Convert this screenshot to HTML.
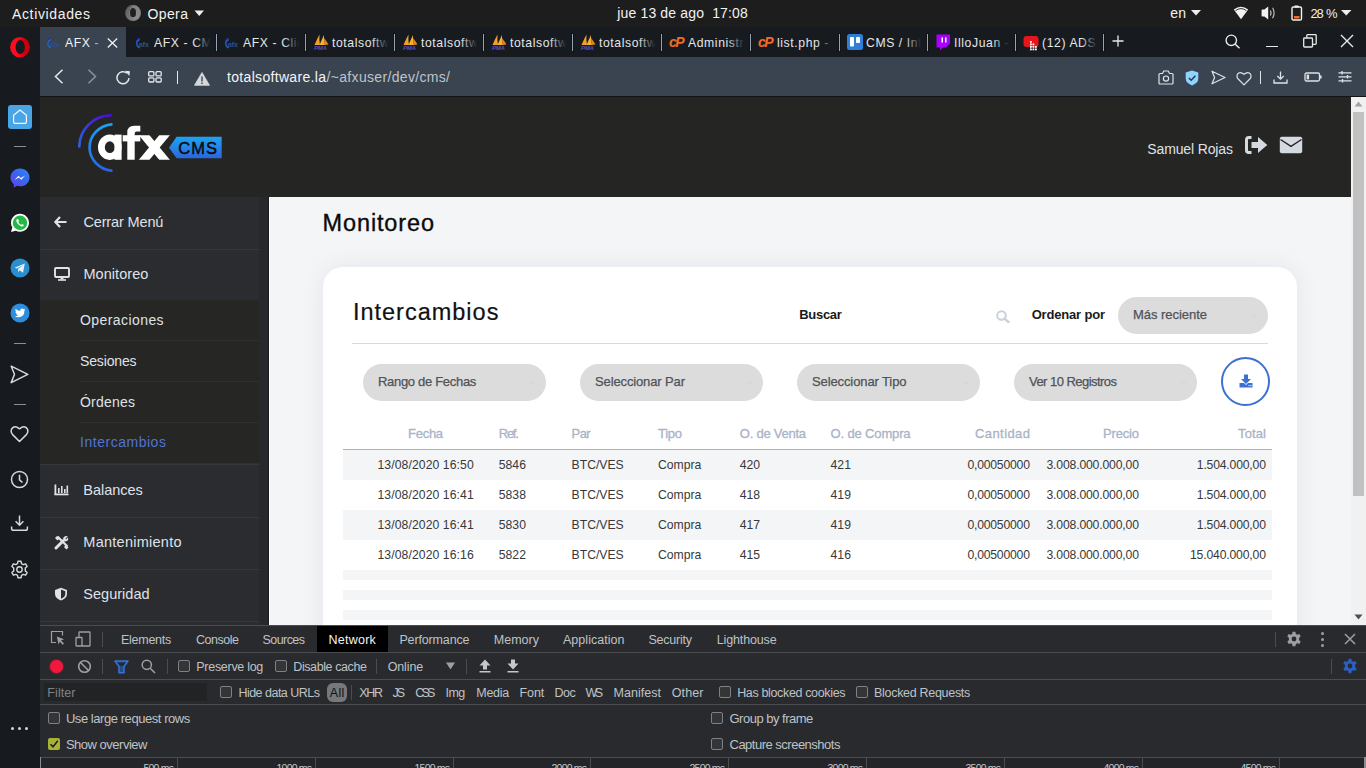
<!DOCTYPE html>
<html><head><meta charset="utf-8"><title>AFX CMS</title>
<style>
html,body{margin:0;padding:0;}
body{width:1366px;height:768px;overflow:hidden;position:relative;background:#1d1d1d;font-family:"Liberation Sans",sans-serif;}
.r{position:absolute;display:block;}
.t{position:absolute;white-space:nowrap;}
.clip{position:absolute;overflow:hidden;}
.clip .t{}
</style></head><body>
<div class="r" style="left:0px;top:0px;width:1366px;height:27px;background:#1d1d1d;"></div>
<div class="t" style="left:12.00px;top:7.05px;font-size:14px;line-height:14px;color:#f2f2f2;letter-spacing:0.641px;">Actividades</div>
<svg class="r" style="left:124px;top:4px;" width="18" height="18" viewBox="0 0 18 18"><defs><linearGradient id="gog" x1="0" y1="0" x2="1" y2="1"><stop offset="0" stop-color="#5a5a5a"/><stop offset="1" stop-color="#8a8a8a"/></linearGradient></defs><ellipse cx="9.1" cy="8.9" rx="7.9" ry="8.1" fill="url(#gog)"/><ellipse cx="10.6" cy="8.6" rx="5.4" ry="7" fill="#9a9a9a" opacity="0.5"/><ellipse cx="9" cy="8.7" rx="3" ry="4.6" fill="#222"/></svg>
<div class="t" style="left:147.40px;top:6.85px;font-size:14px;line-height:14px;color:#f2f2f2;letter-spacing:0.422px;">Opera</div>
<svg class="r" style="left:194px;top:10px;" width="11" height="7" viewBox="0 0 11 7"><path d="M0.5 0.5 L10 0.5 L5.25 6 Z" fill="#eeeeee"/></svg>
<div class="t" style="left:617.30px;top:5.95px;font-size:14px;line-height:14px;color:#f2f2f2;letter-spacing:0.149px;white-space:pre;">jue 13 de ago  17:08</div>
<div class="t" style="left:1170.30px;top:5.95px;font-size:14px;line-height:14px;color:#f2f2f2;letter-spacing:0.127px;">en</div>
<svg class="r" style="left:1191px;top:10px;" width="10" height="6" viewBox="0 0 10 6"><path d="M0 0 L10 0 L5 5.5 Z" fill="#eeeeee"/></svg>
<svg class="r" style="left:1233px;top:6px;" width="16" height="14" viewBox="0 0 16 14"><path d="M8 13.2 L0.8 3.6 Q8 -2 15.2 3.6 Z" fill="#f2f2f2"/><path d="M2.6 4.6 Q8 0.6 13.4 4.6" fill="none" stroke="#1d1d1d" stroke-width="0.9"/></svg>
<svg class="r" style="left:1261px;top:6px;" width="16" height="14" viewBox="0 0 16 14"><path d="M0.6 4.2 Q0.6 3.6 1.3 3.6 H3.4 L7.2 0.5 V13.5 L3.4 10.4 H1.3 Q0.6 10.4 0.6 9.8 Z" fill="#f2f2f2"/><path d="M9.4 4.6 Q10.6 7 9.4 9.4" stroke="#d0d0d0" stroke-width="1.1" fill="none"/><path d="M11.6 1.8 Q14.6 7 11.6 12.2" stroke="#c4c4c4" stroke-width="1.1" fill="none"/></svg>
<svg class="r" style="left:1291px;top:5px;" width="12" height="16" viewBox="0 0 12 16"><rect x="3.5" y="0.5" width="4" height="2" fill="#f2f2f2"/><rect x="1" y="2" width="9.5" height="13" rx="1.3" fill="none" stroke="#f2f2f2" stroke-width="1.4"/><rect x="3" y="11" width="5.5" height="2.5" fill="#f26a2a"/></svg>
<div class="t" style="left:1310.40px;top:6.80px;font-size:13px;line-height:13px;color:#f2f2f2;letter-spacing:-1.060px;">28</div>
<div class="t" style="left:1325.90px;top:6.80px;font-size:13px;line-height:13px;color:#f2f2f2;">%</div>
<svg class="r" style="left:1341px;top:10px;" width="11" height="6" viewBox="0 0 11 6"><path d="M0 0 L10.5 0 L5.25 5.5 Z" fill="#eeeeee"/></svg>
<div class="r" style="left:0px;top:27px;width:40px;height:741px;background:#171b20;"></div>
<svg class="r" style="left:9px;top:36px;" width="22" height="22" viewBox="0 0 22 22"><defs><linearGradient id="og" x1="0" y1="0" x2="1" y2="0"><stop offset="0.35" stop-color="#ff0a1e"/><stop offset="0.75" stop-color="#c8000c"/></linearGradient></defs><ellipse cx="11" cy="11.2" rx="9.9" ry="10.2" fill="url(#og)"/><ellipse cx="11.2" cy="11" rx="4.6" ry="7" fill="#171b20"/></svg>
<div class="r" style="left:8px;top:105px;width:24px;height:24px;background:#49a5e6;border-radius:3px;"></div>
<svg class="r" style="left:8px;top:105px;" width="24" height="24" viewBox="0 0 24 24"><path d="M5.6 10.2 L12 5 L18.4 10.2 V17 Q18.4 18.4 17 18.4 H7 Q5.6 18.4 5.6 17 Z" fill="none" stroke="#f4f8fc" stroke-width="1.2" stroke-linejoin="round"/></svg>
<div class="r" style="left:14px;top:146px;width:12px;height:1px;background:#8a8d92;"></div>
<div class="r" style="left:14px;top:343px;width:12px;height:1px;background:#8a8d92;"></div>
<div class="r" style="left:14px;top:404px;width:12px;height:1px;background:#8a8d92;"></div>
<svg class="r" style="left:9px;top:167px;" width="22" height="22" viewBox="0 0 22 22"><defs><linearGradient id="mg" x1="0" y1="1" x2="1" y2="0"><stop offset="0" stop-color="#6a3ff0"/><stop offset="0.5" stop-color="#3c62ec"/><stop offset="1" stop-color="#2a8ef6"/></linearGradient></defs><path d="M11 1.5 C5.5 1.5 1.5 5.5 1.5 10.5 C1.5 13.3 2.8 15.6 4.8 17.2 V20.5 L8 18.8 C9 19.1 10 19.3 11 19.3 C16.5 19.3 20.5 15.4 20.5 10.4 C20.5 5.5 16.5 1.5 11 1.5 Z" fill="url(#mg)"/><path d="M5.5 13 L9.5 8.8 L11.8 11 L16.2 8.5 L12.3 12.8 L10 10.6 Z" fill="#fff"/></svg>
<svg class="r" style="left:9px;top:212px;" width="22" height="22" viewBox="0 0 22 22"><path d="M11 1.8 C6 1.8 2 5.8 2 10.8 C2 12.5 2.5 14.1 3.3 15.4 L2 20 L6.7 18.7 C8 19.4 9.5 19.8 11 19.8 C16 19.8 20 15.8 20 10.8 C20 5.8 16 1.8 11 1.8 Z" fill="#fff"/><circle cx="11" cy="10.8" r="7.2" fill="#25b848"/><path d="M8 7 Q7 8 7.5 9.8 Q8.6 12.8 11.8 14.3 Q13.6 15 14.6 13.8 L14.8 13 L13 12 L12.2 12.9 Q10.2 12 9.2 10 L10 9.1 L9 7.1 Z" fill="#fff"/></svg>
<svg class="r" style="left:10px;top:258px;" width="20" height="20" viewBox="0 0 20 20"><circle cx="10" cy="10" r="9.5" fill="#2a8fd0"/><path d="M4.5 9.8 L14.8 5.6 L13 14.8 L9.6 12.2 L8.3 14.2 L8 11 L13.2 7 L7 10.5 Z" fill="#e6f1fa"/></svg>
<svg class="r" style="left:10px;top:303px;" width="20" height="20" viewBox="0 0 20 20"><circle cx="10" cy="10" r="9.5" fill="#2d8ee0"/><path d="M15.2 6.6 Q14.6 6.9 14 6.9 Q14.7 6.4 14.9 5.7 Q14.2 6.1 13.6 6.2 Q12.9 5.5 12 5.5 Q10.2 5.7 10.2 7.6 L10.2 8 Q7.4 7.9 5.6 5.8 Q4.8 7.6 6.2 8.7 Q5.7 8.7 5.3 8.5 Q5.4 10.2 7 10.7 Q6.5 10.8 6.1 10.7 Q6.6 12.1 8.1 12.2 Q6.6 13.4 4.7 13.2 Q6.4 14.3 8.4 14.3 Q14.3 14.1 14.4 8 L14.4 7.6 Q15 7.2 15.2 6.6 Z" fill="#fff"/></svg>
<svg class="r" style="left:10px;top:365px;" width="19" height="19" viewBox="0 0 19 19"><path d="M1.2 1.2 L17.8 9.3 L1.2 17.6 L4.5 9.3 Z" fill="none" stroke="#d8d8d8" stroke-width="1.5" stroke-linejoin="round"/></svg>
<svg class="r" style="left:10px;top:425px;" width="19" height="18" viewBox="0 0 19 18"><path d="M9.5 16.5 L2.6 9.6 Q0.2 7 1.8 3.7 Q4.6 -0.1 9.5 3.8 Q14.4 -0.1 17.2 3.7 Q18.8 7 16.4 9.6 Z" fill="none" stroke="#d8d8d8" stroke-width="1.5" stroke-linejoin="round"/></svg>
<svg class="r" style="left:10px;top:470px;" width="19" height="19" viewBox="0 0 19 19"><circle cx="9.5" cy="9.5" r="8" fill="none" stroke="#d8d8d8" stroke-width="1.5"/><path d="M9.5 4.8 V9.8 L12.5 12.5" fill="none" stroke="#d8d8d8" stroke-width="1.5"/></svg>
<svg class="r" style="left:10px;top:515px;" width="19" height="17" viewBox="0 0 19 17"><path d="M9.5 0.5 V10 M5.6 6.3 L9.5 10.2 L13.4 6.3" fill="none" stroke="#d8d8d8" stroke-width="1.5"/><path d="M1.6 11.5 V13.5 Q1.6 15.3 3.4 15.3 H15.6 Q17.4 15.3 17.4 13.5 V11.5" fill="none" stroke="#d8d8d8" stroke-width="1.5"/></svg>
<svg class="r" style="left:10px;top:560px;" width="19" height="19" viewBox="0 0 19 19"><path d="M8 1.2 H11 L11.5 3.6 L13.3 4.6 L15.6 3.8 L17.1 6.4 L15.3 8 V10.9 L17.1 12.6 L15.6 15.2 L13.3 14.4 L11.5 15.4 L11 17.8 H8 L7.5 15.4 L5.7 14.4 L3.4 15.2 L1.9 12.6 L3.7 10.9 V8 L1.9 6.4 L3.4 3.8 L5.7 4.6 L7.5 3.6 Z" fill="none" stroke="#d8d8d8" stroke-width="1.4" stroke-linejoin="round"/><circle cx="9.5" cy="9.5" r="2.7" fill="none" stroke="#d8d8d8" stroke-width="1.4"/></svg>
<div class="r" style="left:11px;top:727px;width:3px;height:3px;background:#d8d8d8;border-radius:50%;"></div>
<div class="r" style="left:18px;top:727px;width:3px;height:3px;background:#d8d8d8;border-radius:50%;"></div>
<div class="r" style="left:25px;top:727px;width:3px;height:3px;background:#d8d8d8;border-radius:50%;"></div>
<div class="r" style="left:40px;top:27px;width:1326px;height:30px;background:#171b20;"></div>
<div class="r" style="left:40px;top:27px;width:86px;height:30px;background:#3a4350;"></div>
<svg class="r" style="left:135px;top:36px;" width="17" height="14" viewBox="0 0 17 14"><path d="M4.6 2 A5.5 5.5 0 0 0 1.3 7" fill="none" stroke="#3a1fb8" stroke-width="1.1"/><path d="M4.8 3.6 A3.9 4.2 0 0 0 4.8 11.8" fill="none" stroke="#2266c0" stroke-width="1.2"/><text x="3.6" y="10.5" font-size="7.6" font-weight="700" fill="#2d4f86" font-family="Liberation Sans" letter-spacing="-0.3">afx</text></svg>
<div class="clip" style="left:154.0px;top:30px;width:58.0px;height:24px;"><div class="t" style="left:0.00px;top:6.67px;font-size:12.2px;line-height:12.2px;color:#e4e6ea;letter-spacing:0.6px;">AFX - CMS</div>
<div class="r" style="right:0;top:0;width:18px;height:24px;background:linear-gradient(to right,rgba(23,27,32,0),#171b20 90%);"></div></div>
<div class="r" style="left:215px;top:33px;width:3px;height:19px;background:#101318;"></div>
<div class="r" style="left:216px;top:34px;width:1px;height:17px;background:#98a4b3;"></div>
<svg class="r" style="left:224px;top:36px;" width="17" height="14" viewBox="0 0 17 14"><path d="M4.6 2 A5.5 5.5 0 0 0 1.3 7" fill="none" stroke="#3a1fb8" stroke-width="1.1"/><path d="M4.8 3.6 A3.9 4.2 0 0 0 4.8 11.8" fill="none" stroke="#2266c0" stroke-width="1.2"/><text x="3.6" y="10.5" font-size="7.6" font-weight="700" fill="#2d4f86" font-family="Liberation Sans" letter-spacing="-0.3">afx</text></svg>
<div class="clip" style="left:243.0px;top:30px;width:58.0px;height:24px;"><div class="t" style="left:0.00px;top:6.67px;font-size:12.2px;line-height:12.2px;color:#e4e6ea;letter-spacing:0.6px;">AFX - Clie</div>
<div class="r" style="right:0;top:0;width:18px;height:24px;background:linear-gradient(to right,rgba(23,27,32,0),#171b20 90%);"></div></div>
<div class="r" style="left:304px;top:33px;width:3px;height:19px;background:#101318;"></div>
<div class="r" style="left:305px;top:34px;width:1px;height:17px;background:#98a4b3;"></div>
<svg class="r" style="left:313px;top:34px;" width="17" height="16" viewBox="0 0 17 16"><path d="M1.5 11 Q4 5 6.5 0.5 Q6 6 7 11 Z" fill="#f2a02a"/><path d="M6.5 11 Q9 5 11 1 Q10.5 6 12 11 Z" fill="#f6b030"/><path d="M11 4 Q13.5 7 15.5 10.5 L11.5 11 Z" fill="#e8841a"/><text x="1" y="15.5" font-size="6" font-weight="700" font-style="italic" fill="#5a4fb8" font-family="Liberation Sans" letter-spacing="-0.3">PMA</text></svg>
<div class="clip" style="left:332.0px;top:30px;width:58.0px;height:24px;"><div class="t" style="left:0.00px;top:6.67px;font-size:12.2px;line-height:12.2px;color:#e4e6ea;letter-spacing:0.6px;">totalsoftw</div>
<div class="r" style="right:0;top:0;width:18px;height:24px;background:linear-gradient(to right,rgba(23,27,32,0),#171b20 90%);"></div></div>
<div class="r" style="left:393px;top:33px;width:3px;height:19px;background:#101318;"></div>
<div class="r" style="left:394px;top:34px;width:1px;height:17px;background:#98a4b3;"></div>
<svg class="r" style="left:402px;top:34px;" width="17" height="16" viewBox="0 0 17 16"><path d="M1.5 11 Q4 5 6.5 0.5 Q6 6 7 11 Z" fill="#f2a02a"/><path d="M6.5 11 Q9 5 11 1 Q10.5 6 12 11 Z" fill="#f6b030"/><path d="M11 4 Q13.5 7 15.5 10.5 L11.5 11 Z" fill="#e8841a"/><text x="1" y="15.5" font-size="6" font-weight="700" font-style="italic" fill="#5a4fb8" font-family="Liberation Sans" letter-spacing="-0.3">PMA</text></svg>
<div class="clip" style="left:421.0px;top:30px;width:58.0px;height:24px;"><div class="t" style="left:0.00px;top:6.67px;font-size:12.2px;line-height:12.2px;color:#e4e6ea;letter-spacing:0.6px;">totalsoftw</div>
<div class="r" style="right:0;top:0;width:18px;height:24px;background:linear-gradient(to right,rgba(23,27,32,0),#171b20 90%);"></div></div>
<div class="r" style="left:482px;top:33px;width:3px;height:19px;background:#101318;"></div>
<div class="r" style="left:483px;top:34px;width:1px;height:17px;background:#98a4b3;"></div>
<svg class="r" style="left:491px;top:34px;" width="17" height="16" viewBox="0 0 17 16"><path d="M1.5 11 Q4 5 6.5 0.5 Q6 6 7 11 Z" fill="#f2a02a"/><path d="M6.5 11 Q9 5 11 1 Q10.5 6 12 11 Z" fill="#f6b030"/><path d="M11 4 Q13.5 7 15.5 10.5 L11.5 11 Z" fill="#e8841a"/><text x="1" y="15.5" font-size="6" font-weight="700" font-style="italic" fill="#5a4fb8" font-family="Liberation Sans" letter-spacing="-0.3">PMA</text></svg>
<div class="clip" style="left:510.0px;top:30px;width:58.0px;height:24px;"><div class="t" style="left:0.00px;top:6.67px;font-size:12.2px;line-height:12.2px;color:#e4e6ea;letter-spacing:0.6px;">totalsoftw</div>
<div class="r" style="right:0;top:0;width:18px;height:24px;background:linear-gradient(to right,rgba(23,27,32,0),#171b20 90%);"></div></div>
<div class="r" style="left:571px;top:33px;width:3px;height:19px;background:#101318;"></div>
<div class="r" style="left:572px;top:34px;width:1px;height:17px;background:#98a4b3;"></div>
<svg class="r" style="left:580px;top:34px;" width="17" height="16" viewBox="0 0 17 16"><path d="M1.5 11 Q4 5 6.5 0.5 Q6 6 7 11 Z" fill="#f2a02a"/><path d="M6.5 11 Q9 5 11 1 Q10.5 6 12 11 Z" fill="#f6b030"/><path d="M11 4 Q13.5 7 15.5 10.5 L11.5 11 Z" fill="#e8841a"/><text x="1" y="15.5" font-size="6" font-weight="700" font-style="italic" fill="#5a4fb8" font-family="Liberation Sans" letter-spacing="-0.3">PMA</text></svg>
<div class="clip" style="left:599.0px;top:30px;width:58.0px;height:24px;"><div class="t" style="left:0.00px;top:6.67px;font-size:12.2px;line-height:12.2px;color:#e4e6ea;letter-spacing:0.6px;">totalsoftw</div>
<div class="r" style="right:0;top:0;width:18px;height:24px;background:linear-gradient(to right,rgba(23,27,32,0),#171b20 90%);"></div></div>
<div class="r" style="left:660px;top:33px;width:3px;height:19px;background:#101318;"></div>
<div class="r" style="left:661px;top:34px;width:1px;height:17px;background:#98a4b3;"></div>
<svg class="r" style="left:669px;top:35px;" width="18" height="14" viewBox="0 0 18 14"><text x="0" y="12" font-size="14" font-weight="700" font-style="italic" fill="#f36b21" font-family="Liberation Sans" letter-spacing="-1.5">cP</text></svg>
<div class="clip" style="left:688.0px;top:30px;width:58.0px;height:24px;"><div class="t" style="left:0.00px;top:6.67px;font-size:12.2px;line-height:12.2px;color:#e4e6ea;letter-spacing:0.6px;">Administr</div>
<div class="r" style="right:0;top:0;width:18px;height:24px;background:linear-gradient(to right,rgba(23,27,32,0),#171b20 90%);"></div></div>
<div class="r" style="left:749px;top:33px;width:3px;height:19px;background:#101318;"></div>
<div class="r" style="left:750px;top:34px;width:1px;height:17px;background:#98a4b3;"></div>
<svg class="r" style="left:758px;top:35px;" width="18" height="14" viewBox="0 0 18 14"><text x="0" y="12" font-size="14" font-weight="700" font-style="italic" fill="#f36b21" font-family="Liberation Sans" letter-spacing="-1.5">cP</text></svg>
<div class="clip" style="left:777.0px;top:30px;width:58.0px;height:24px;"><div class="t" style="left:0.00px;top:6.67px;font-size:12.2px;line-height:12.2px;color:#e4e6ea;letter-spacing:0.6px;">list.php - A</div>
<div class="r" style="right:0;top:0;width:18px;height:24px;background:linear-gradient(to right,rgba(23,27,32,0),#171b20 90%);"></div></div>
<div class="r" style="left:838px;top:33px;width:3px;height:19px;background:#101318;"></div>
<div class="r" style="left:839px;top:34px;width:1px;height:17px;background:#98a4b3;"></div>
<svg class="r" style="left:847px;top:34px;" width="16" height="16" viewBox="0 0 16 16"><rect x="0" y="0" width="16" height="16" rx="2.5" fill="#2f7fd8"/><rect x="3" y="3" width="4" height="9.5" rx="0.8" fill="#fff"/><rect x="9" y="3" width="4" height="6" rx="0.8" fill="#fff"/></svg>
<div class="clip" style="left:866.0px;top:30px;width:57.0px;height:24px;"><div class="t" style="left:0.00px;top:6.67px;font-size:12.2px;line-height:12.2px;color:#e4e6ea;letter-spacing:0.6px;">CMS / Inte</div>
<div class="r" style="right:0;top:0;width:18px;height:24px;background:linear-gradient(to right,rgba(23,27,32,0),#171b20 90%);"></div></div>
<div class="r" style="left:926px;top:33px;width:3px;height:19px;background:#101318;"></div>
<div class="r" style="left:927px;top:34px;width:1px;height:17px;background:#98a4b3;"></div>
<svg class="r" style="left:935px;top:34px;" width="16" height="17" viewBox="0 0 16 17"><path d="M1.5 0.5 H15 V9.5 L11 13.5 H8 L5 16.5 V13.5 H1.5 Z" fill="#a800ff"/><rect x="6.5" y="3.5" width="1.5" height="5" fill="#fff"/><rect x="10" y="3.5" width="1.5" height="5" fill="#fff"/></svg>
<div class="clip" style="left:954.0px;top:30px;width:57.0px;height:24px;"><div class="t" style="left:0.00px;top:6.67px;font-size:12.2px;line-height:12.2px;color:#e4e6ea;letter-spacing:0.6px;">IlloJuan - T</div>
<div class="r" style="right:0;top:0;width:18px;height:24px;background:linear-gradient(to right,rgba(23,27,32,0),#171b20 90%);"></div></div>
<div class="r" style="left:1014px;top:33px;width:3px;height:19px;background:#101318;"></div>
<div class="r" style="left:1015px;top:34px;width:1px;height:17px;background:#98a4b3;"></div>
<svg class="r" style="left:1023px;top:35px;" width="17" height="16" viewBox="0 0 17 16"><rect x="0.5" y="1" width="15" height="11" rx="3" fill="#e8141b"/><rect x="6" y="5" width="9" height="11" fill="#1b1d22" opacity="0"/><rect x="7" y="6" width="1.8" height="1.8" fill="#ffffff"/><rect x="7" y="8.5" width="1.8" height="1.8" fill="#ffffff"/><rect x="9.5" y="8.5" width="1.8" height="1.8" fill="#ffffff"/><rect x="7" y="11" width="1.8" height="1.8" fill="#ffffff"/><rect x="9.5" y="11" width="1.8" height="1.8" fill="#ffffff"/><rect x="12" y="11" width="1.8" height="1.8" fill="#ffffff"/><rect x="7" y="13.5" width="1.8" height="1.8" fill="#ffffff"/><rect x="9.5" y="13.5" width="1.8" height="1.8" fill="#ffffff"/><rect x="12" y="13.5" width="1.8" height="1.8" fill="#ffffff"/></svg>
<div class="clip" style="left:1042.0px;top:30px;width:57.0px;height:24px;"><div class="t" style="left:0.00px;top:6.67px;font-size:12.2px;line-height:12.2px;color:#e4e6ea;letter-spacing:0.6px;">(12) ADSC</div>
<div class="r" style="right:0;top:0;width:18px;height:24px;background:linear-gradient(to right,rgba(23,27,32,0),#171b20 90%);"></div></div>
<div class="r" style="left:1102px;top:33px;width:3px;height:19px;background:#101318;"></div>
<div class="r" style="left:1103px;top:34px;width:1px;height:17px;background:#98a4b3;"></div>
<svg class="r" style="left:46px;top:36px;" width="17" height="14" viewBox="0 0 17 14"><path d="M4.6 2 A5.5 5.5 0 0 0 1.3 7" fill="none" stroke="#3a1fb8" stroke-width="1.1"/><path d="M4.8 3.6 A3.9 4.2 0 0 0 4.8 11.8" fill="none" stroke="#2266c0" stroke-width="1.2"/><text x="3.6" y="10.5" font-size="7.6" font-weight="700" fill="#2d4f86" font-family="Liberation Sans" letter-spacing="-0.3">afx</text></svg>
<div class="clip" style="left:65px;top:30px;width:38px;height:24px;"><div class="t" style="left:0.00px;top:6.67px;font-size:12.2px;line-height:12.2px;color:#f0f2f4;letter-spacing:0.6px;">AFX - CMS</div>
<div class="r" style="right:0;top:0;width:10px;height:24px;background:linear-gradient(to right,rgba(58,67,80,0),#3a4350);"></div></div>
<svg class="r" style="left:107px;top:38px;" width="11" height="10" viewBox="0 0 11 10"><path d="M0.8 0.5 L10.2 9.5 M10.2 0.5 L0.8 9.5" stroke="#f0f0f0" stroke-width="1.3"/></svg>
<svg class="r" style="left:1112px;top:35px;" width="12" height="12" viewBox="0 0 12 12"><path d="M6 0.5 V11.5 M0.5 6 H11.5" stroke="#e8e8e8" stroke-width="1.3"/></svg>
<svg class="r" style="left:1225px;top:34px;" width="16" height="15" viewBox="0 0 16 15"><circle cx="6.3" cy="6.3" r="5.2" fill="none" stroke="#e8e8e8" stroke-width="1.4"/><path d="M10 10 L14.5 14.3" stroke="#e8e8e8" stroke-width="1.5"/></svg>
<div class="r" style="left:1266px;top:46px;width:12px;height:1.3px;background:#e8e8e8;"></div>
<svg class="r" style="left:1303px;top:34px;" width="14" height="14" viewBox="0 0 14 14"><rect x="0.7" y="4" width="8.8" height="9" rx="0.8" fill="none" stroke="#e8e8e8" stroke-width="1.3"/><path d="M3.8 3.8 V1.5 Q3.8 0.7 4.6 0.7 H12.4 Q13.2 0.7 13.2 1.5 V9.6 Q13.2 10.3 12.4 10.3 H9.7" fill="none" stroke="#e8e8e8" stroke-width="1.3"/></svg>
<svg class="r" style="left:1340px;top:34px;" width="14" height="14" viewBox="0 0 14 14"><path d="M1 1 L13 13 M13 1 L1 13" stroke="#e8e8e8" stroke-width="1.4"/></svg>
<div class="r" style="left:40px;top:57px;width:1326px;height:39px;background:#3a4350;"></div>
<div class="r" style="left:40px;top:96px;width:1326px;height:1px;background:#111316;"></div>
<svg class="r" style="left:54px;top:69px;" width="10" height="15" viewBox="0 0 10 15"><path d="M8.5 0.8 L1.5 7.5 L8.5 14.2" fill="none" stroke="#e6e8ea" stroke-width="1.5"/></svg>
<svg class="r" style="left:87px;top:69px;" width="10" height="15" viewBox="0 0 10 15"><path d="M1.5 0.8 L8.5 7.5 L1.5 14.2" fill="none" stroke="#8d939b" stroke-width="1.5"/></svg>
<svg class="r" style="left:116px;top:70px;" width="16" height="15" viewBox="0 0 16 15"><path d="M13 8 A6 6 0 1 1 11 3.2" fill="none" stroke="#e6e8ea" stroke-width="1.5"/><path d="M9 0.8 L14 1.2 L13.3 6 Z" fill="#e6e8ea"/></svg>
<svg class="r" style="left:148px;top:71px;" width="14" height="12" viewBox="0 0 14 12"><rect x="0.7" y="0.7" width="5.2" height="4.2" rx="1" fill="none" stroke="#e6e8ea" stroke-width="1.3"/><rect x="8" y="0.7" width="5.2" height="4.2" rx="1" fill="none" stroke="#e6e8ea" stroke-width="1.3"/><rect x="0.7" y="6.8" width="5.2" height="4.2" rx="1" fill="none" stroke="#e6e8ea" stroke-width="1.3"/><rect x="8" y="6.8" width="5.2" height="4.2" rx="1" fill="none" stroke="#e6e8ea" stroke-width="1.3"/></svg>
<div class="r" style="left:177px;top:71px;width:1px;height:13px;background:#e6e8ea;"></div>
<svg class="r" style="left:194px;top:72px;" width="16" height="14" viewBox="0 0 16 14"><path d="M8 0.5 L15.5 13.3 H0.5 Z" fill="#d6d8da" stroke="#d6d8da" stroke-width="0.8" stroke-linejoin="round"/><rect x="7.3" y="4.5" width="1.4" height="5" fill="#3a4350"/><rect x="7.3" y="10.5" width="1.4" height="1.5" fill="#3a4350"/></svg>
<div class="t" style="left:227.00px;top:70.15px;font-size:14px;line-height:14px;color:#f4f5f6;letter-spacing:0.323px;">totalsoftware.la</div>
<div class="t" style="left:326.50px;top:70.15px;font-size:14px;line-height:14px;color:#bfc4cb;letter-spacing:0.331px;">/~afxuser/dev/cms/</div>
<svg class="r" style="left:1158px;top:70px;" width="16" height="15" viewBox="0 0 16 15"><path d="M1 4.5 Q1 3.5 2 3.5 H4.5 L5.8 1 H10.2 L11.5 3.5 H14 Q15 3.5 15 4.5 V13 Q15 14 14 14 H2 Q1 14 1 13 Z" fill="none" stroke="#e0e3e6" stroke-width="1.2"/><circle cx="8" cy="8.6" r="2.6" fill="none" stroke="#e0e3e6" stroke-width="1.2"/></svg>
<svg class="r" style="left:1185px;top:70px;" width="14" height="16" viewBox="0 0 14 16"><path d="M7 0.5 L13.3 2.6 V8.5 Q13.3 12.8 7 15.5 Q0.7 12.8 0.7 8.5 V2.6 Z" fill="#8fd3ff"/><path d="M3.8 8 L6.2 10.3 L10.4 5.8" fill="none" stroke="#2c3a4a" stroke-width="1.5"/></svg>
<svg class="r" style="left:1211px;top:70px;" width="15" height="15" viewBox="0 0 15 15"><path d="M1 1.2 L14 7.5 L1 13.8 L3.6 7.5 Z" fill="none" stroke="#e0e3e6" stroke-width="1.2" stroke-linejoin="round"/></svg>
<svg class="r" style="left:1236px;top:71px;" width="16" height="15" viewBox="0 0 16 15"><path d="M8 13.8 L2.2 8 Q0.2 5.8 1.5 3.2 Q3.8 0 8 3.3 Q12.2 0 14.5 3.2 Q15.8 5.8 13.8 8 Z" fill="none" stroke="#e0e3e6" stroke-width="1.2" stroke-linejoin="round"/></svg>
<div class="r" style="left:1260px;top:71px;width:1px;height:13px;background:#e0e3e6;"></div>
<svg class="r" style="left:1273px;top:71px;" width="15" height="13" viewBox="0 0 15 13"><path d="M7.5 0.5 V8 M4.3 5 L7.5 8.2 L10.7 5" fill="none" stroke="#e0e3e6" stroke-width="1.3"/><path d="M1 8.5 V12 H14 V8.5" fill="none" stroke="#e0e3e6" stroke-width="1.3"/></svg>
<svg class="r" style="left:1304px;top:72px;" width="18" height="10" viewBox="0 0 18 10"><rect x="1" y="1" width="14.5" height="8" rx="1.5" fill="none" stroke="#e0e3e6" stroke-width="1.3"/><rect x="2.6" y="2.6" width="2.5" height="4.8" fill="#e0e3e6"/><rect x="16" y="3.5" width="1.6" height="3" fill="#e0e3e6"/></svg>
<svg class="r" style="left:1338px;top:71px;" width="14" height="12" viewBox="0 0 14 12"><path d="M0.5 1.8 H13.5 M0.5 5.8 H13.5 M0.5 9.8 H13.5" stroke="#e0e3e6" stroke-width="1.2"/><path d="M4 0 V3.6 M9.5 4 V7.6 M4.5 8 V11.6" stroke="#e0e3e6" stroke-width="1.3"/></svg>
<div class="r" style="left:40px;top:97px;width:1311px;height:100px;background:#252523;"></div>
<svg class="r" style="left:70px;top:108px;" width="50" height="70" viewBox="0 0 50 70"><defs><linearGradient id="g1" x1="0" y1="1" x2="1" y2="0"><stop offset="0" stop-color="#3060dc"/><stop offset="1" stop-color="#4a0fd0"/></linearGradient><linearGradient id="g2" x1="0" y1="0" x2="0" y2="1"><stop offset="0" stop-color="#1aa2f2"/><stop offset="1" stop-color="#2c62e2"/></linearGradient></defs><g transform="translate(-70,-108)"><path d="M79.3 146.5 A31.6 31.6 0 0 1 110.5 115.4" fill="none" stroke="url(#g1)" stroke-width="2.7" stroke-linecap="round"/><path d="M111.4 124.3 A24.6 23.3 0 0 0 111.4 170.6" fill="none" stroke="url(#g2)" stroke-width="2.7" stroke-linecap="round"/></g></svg>
<svg class="r" style="left:90px;top:120px;" width="85" height="45" viewBox="0 0 85 45"><g transform="translate(-90,-120)" fill="#ffffff"><ellipse cx="109.8" cy="147.2" rx="8.4" ry="9.3" fill="none" stroke="#ffffff" stroke-width="6.8"/><rect x="114.6" y="134.6" width="7" height="25.2"/><path d="M127.3 159.8 V132.5 Q127.3 125.8 134.2 125.8 H140.3 V131.6 H136.6 Q134.7 131.6 134.7 133.6 V159.8 Z"/><rect x="122.7" y="135.2" width="17.6" height="6.2"/><clipPath id="cx"><rect x="138" y="135.2" width="33" height="24.6"/></clipPath><g clip-path="url(#cx)" stroke="#ffffff" stroke-width="8.2"><path d="M141.5 132 L167.2 163"/><path d="M167.2 132 L141.5 163"/></g></g></svg>
<svg class="r" style="left:168px;top:136px;" width="55" height="23" viewBox="0 0 55 23"><defs><linearGradient id="g3" x1="0" y1="0" x2="0" y2="1"><stop offset="0" stop-color="#1ea4f2"/><stop offset="1" stop-color="#2b66dc"/></linearGradient></defs><path d="M1 11.7 L8.6 0.7 H53.7 V22.3 H8.6 Z" fill="url(#g3)"/></svg>
<div class="t" style="left:178.30px;top:139.63px;font-size:16.5px;line-height:16.5px;color:#0a0a0a;letter-spacing:1.016px;-webkit-text-stroke:0.45px #0a0a0a;">CMS</div>
<div class="t" style="left:1147.30px;top:141.55px;font-size:14px;line-height:14px;color:#dfe2e7;letter-spacing:-0.132px;">Samuel Rojas</div>
<svg class="r" style="left:1245px;top:136px;" width="23" height="18" viewBox="0 0 23 18"><path d="M6.5 1.5 H3.8 Q1.5 1.5 1.5 3.8 V14.2 Q1.5 16.5 3.8 16.5 H6.5" fill="none" stroke="#d5d9e0" stroke-width="3"/><path d="M6.5 6 H13 V1 L22.3 9 L13 17 V12 H6.5 Z" fill="#d5d9e0"/></svg>
<svg class="r" style="left:1279px;top:136px;" width="24" height="18" viewBox="0 0 24 18"><rect x="0.8" y="0.8" width="22.4" height="16.4" rx="2" fill="#d5d9e0"/><path d="M1.5 3.5 L12 10.3 L22.5 3.5" fill="none" stroke="#252523" stroke-width="1.4"/></svg>
<div class="r" style="left:40px;top:197px;width:219px;height:428px;background:#2b2c30;"></div>
<div class="r" style="left:259px;top:197px;width:10px;height:428px;background:#27282c;"></div>
<div class="r" style="left:268px;top:197px;width:1px;height:428px;background:#1b1c1e;"></div>
<div class="r" style="left:269px;top:197px;width:1px;height:428px;background:#ffffff;"></div>
<div class="r" style="left:40px;top:249px;width:219px;height:1px;background:#36373b;"></div>
<div class="r" style="left:40px;top:300px;width:219px;height:164px;background:#262624;"></div>
<div class="r" style="left:80px;top:340px;width:179px;height:1px;background:#303030;"></div>
<div class="r" style="left:80px;top:381px;width:179px;height:1px;background:#303030;"></div>
<div class="r" style="left:80px;top:422px;width:179px;height:1px;background:#303030;"></div>
<div class="r" style="left:80px;top:463px;width:179px;height:1px;background:#303030;"></div>
<div class="r" style="left:40px;top:464px;width:219px;height:1px;background:#36373b;"></div>
<div class="r" style="left:40px;top:517px;width:219px;height:1px;background:#36373b;"></div>
<div class="r" style="left:40px;top:569px;width:219px;height:1px;background:#36373b;"></div>
<div class="r" style="left:40px;top:621px;width:219px;height:1px;background:#36373b;"></div>
<svg class="r" style="left:54px;top:216px;" width="13" height="12" viewBox="0 0 13 12"><path d="M6 1 L1.3 6 L6 11 M1.5 6 H12.5" fill="none" stroke="#dfe2e8" stroke-width="2.2" stroke-linejoin="round"/></svg>
<div class="t" style="left:83.40px;top:214.93px;font-size:14.5px;line-height:14.5px;color:#dfe2e8;letter-spacing:-0.139px;">Cerrar Menú</div>
<svg class="r" style="left:54px;top:267px;" width="16" height="14" viewBox="0 0 16 14"><rect x="1" y="1" width="14" height="9" rx="1" fill="none" stroke="#dfe2e8" stroke-width="1.9"/><rect x="6.5" y="10" width="3" height="2.5" fill="#dfe2e8"/><rect x="4" y="12.2" width="8" height="1.6" fill="#dfe2e8"/></svg>
<div class="t" style="left:83.40px;top:267.23px;font-size:14.5px;line-height:14.5px;color:#dfe2e8;letter-spacing:0.065px;">Monitoreo</div>
<div class="t" style="left:80.00px;top:312.85px;font-size:14px;line-height:14px;color:#dfe2e8;letter-spacing:0.422px;">Operaciones</div>
<div class="t" style="left:80.00px;top:353.85px;font-size:14px;line-height:14px;color:#dfe2e8;letter-spacing:-0.142px;">Sesiones</div>
<div class="t" style="left:80.00px;top:394.55px;font-size:14px;line-height:14px;color:#dfe2e8;letter-spacing:0.217px;">Órdenes</div>
<div class="t" style="left:80.00px;top:435.15px;font-size:14px;line-height:14px;color:#4f74d6;letter-spacing:0.523px;">Intercambios</div>
<svg class="r" style="left:54px;top:484px;" width="15" height="12" viewBox="0 0 15 12"><rect x="0.5" y="0.5" width="1.8" height="10.5" fill="#dfe2e8"/><rect x="0.5" y="9.5" width="14" height="1.8" fill="#dfe2e8"/><rect x="4" y="4" width="1.6" height="5" fill="#dfe2e8"/><rect x="7" y="2" width="1.6" height="7" fill="#dfe2e8"/><rect x="10" y="5" width="1.6" height="4" fill="#dfe2e8"/><rect x="12.5" y="1.5" width="1.6" height="7.5" fill="#dfe2e8"/></svg>
<div class="t" style="left:83.30px;top:483.33px;font-size:14.5px;line-height:14.5px;color:#dfe2e8;letter-spacing:-0.022px;">Balances</div>
<svg class="r" style="left:54px;top:535px;" width="15" height="15" viewBox="0 0 15 15"><path d="M2 13 L9.5 5.5" stroke="#dfe2e8" stroke-width="3" stroke-linecap="round"/><path d="M3.5 1.5 L13.5 11.5" stroke="#dfe2e8" stroke-width="2.2"/><path d="M1 3 L3 1 L5.5 3.5 L3.5 5.5 Z" fill="#dfe2e8"/><path d="M9 3.5 Q10 0 13.8 1.2 L11.5 3.5 L12 4.5 L14 2.2 Q15 6 11.5 6.5 Z" fill="#dfe2e8"/><path d="M11 11 L13.5 13.5" stroke="#dfe2e8" stroke-width="3"/></svg>
<div class="t" style="left:83.30px;top:535.23px;font-size:14.5px;line-height:14.5px;color:#dfe2e8;letter-spacing:0.258px;">Mantenimiento</div>
<svg class="r" style="left:54px;top:587px;" width="14" height="14" viewBox="0 0 14 14"><path d="M7 0.8 L13 3 V6.8 Q13 11.5 7 13.6 Q1 11.5 1 6.8 V3 Z" fill="#dfe2e8"/><path d="M7 2.6 L11.3 4.2 V6.8 Q11.3 10.2 7 11.8 Z" fill="#2b2c30"/></svg>
<div class="t" style="left:83.30px;top:587.23px;font-size:14.5px;line-height:14.5px;color:#dfe2e8;letter-spacing:0.024px;">Seguridad</div>
<div class="r" style="left:270px;top:197px;width:1081px;height:428px;background:#f4f5f7;"></div>
<div class="t" style="left:322.60px;top:212.11px;font-size:23.5px;line-height:23.5px;color:#0b0b0b;letter-spacing:0.862px;-webkit-text-stroke:0.35px #0b0b0b;">Monitoreo</div>
<div class="r" style="left:323px;top:267px;width:974px;height:400px;background:#ffffff;border-radius:20px;box-shadow:0 0 24px rgba(20,30,60,0.07);"></div>
<div class="t" style="left:352.90px;top:301.11px;font-size:23.5px;line-height:23.5px;color:#111111;letter-spacing:0.997px;-webkit-text-stroke:0.2px #111;">Intercambios</div>
<div class="r" style="left:352px;top:343px;width:916px;height:1px;background:#d3dbe6;"></div>
<div class="t" style="left:799.20px;top:308.20px;font-size:13px;line-height:13px;color:#1a1a1a;letter-spacing:-0.276px;font-weight:700;">Buscar</div>
<svg class="r" style="left:996px;top:310px;" width="14" height="13" viewBox="0 0 14 13"><circle cx="5.5" cy="5.5" r="4.3" fill="none" stroke="#c9d1dc" stroke-width="2"/><path d="M8.6 8.6 L12.6 12.2" stroke="#c9d1dc" stroke-width="2.4" stroke-linecap="round"/></svg>
<div class="t" style="left:1031.70px;top:308.20px;font-size:13px;line-height:13px;color:#1a1a1a;letter-spacing:-0.182px;font-weight:700;">Ordenar por</div>
<div class="r" style="left:1118px;top:297px;width:150px;height:37px;background:#dcdcdc;border-radius:18.5px;"></div>
<div class="t" style="left:1133.00px;top:308.30px;font-size:13px;line-height:13px;color:#4f5359;letter-spacing:-0.038px;-webkit-text-stroke:0.25px #4f5359;">Más reciente</div>
<svg class="r" style="left:1251px;top:314px;" width="7" height="5" viewBox="0 0 7 5"><path d="M0 0.5 H7 L3.5 4.2 Z" fill="#d2d8e2"/></svg>
<div class="r" style="left:363px;top:364px;width:183px;height:37px;background:#dcdcdc;border-radius:18.5px;"></div>
<div class="t" style="left:378.00px;top:375.30px;font-size:13px;line-height:13px;color:#4f5359;letter-spacing:-0.309px;-webkit-text-stroke:0.25px #4f5359;">Rango de Fechas</div>
<svg class="r" style="left:529px;top:381px;" width="7" height="5" viewBox="0 0 7 5"><path d="M0 0.5 H7 L3.5 4.2 Z" fill="#d2d8e2"/></svg>
<div class="r" style="left:580px;top:364px;width:183px;height:37px;background:#dcdcdc;border-radius:18.5px;"></div>
<div class="t" style="left:595.00px;top:375.30px;font-size:13px;line-height:13px;color:#4f5359;letter-spacing:-0.127px;-webkit-text-stroke:0.25px #4f5359;">Seleccionar Par</div>
<svg class="r" style="left:746px;top:381px;" width="7" height="5" viewBox="0 0 7 5"><path d="M0 0.5 H7 L3.5 4.2 Z" fill="#d2d8e2"/></svg>
<div class="r" style="left:797px;top:364px;width:183px;height:37px;background:#dcdcdc;border-radius:18.5px;"></div>
<div class="t" style="left:812.00px;top:375.30px;font-size:13px;line-height:13px;color:#4f5359;letter-spacing:-0.108px;-webkit-text-stroke:0.25px #4f5359;">Seleccionar Tipo</div>
<svg class="r" style="left:963px;top:381px;" width="7" height="5" viewBox="0 0 7 5"><path d="M0 0.5 H7 L3.5 4.2 Z" fill="#d2d8e2"/></svg>
<div class="r" style="left:1014px;top:364px;width:183px;height:37px;background:#dcdcdc;border-radius:18.5px;"></div>
<div class="t" style="left:1029.00px;top:375.30px;font-size:13px;line-height:13px;color:#4f5359;letter-spacing:-0.540px;-webkit-text-stroke:0.25px #4f5359;">Ver 10 Registros</div>
<svg class="r" style="left:1180px;top:381px;" width="7" height="5" viewBox="0 0 7 5"><path d="M0 0.5 H7 L3.5 4.2 Z" fill="#d2d8e2"/></svg>
<div class="r" style="left:1221px;top:357px;width:49px;height:49px;background:transparent;border:2px solid #3e6fd2;border-radius:50%;box-sizing:border-box;"></div>
<svg class="r" style="left:1239px;top:374px;" width="14" height="14" viewBox="0 0 14 14"><rect x="5" y="0.5" width="4" height="5" fill="#3e6fd2"/><path d="M2 5 H12 L7 10 Z" fill="#3e6fd2"/><path d="M0.5 9 H5 L7 11 L9 9 H13.5 V13.5 H0.5 Z" fill="#3e6fd2"/><rect x="9.5" y="11" width="1.2" height="1.2" fill="#dfe6f4"/><rect x="11.3" y="11" width="1.2" height="1.2" fill="#dfe6f4"/></svg>
<div class="t" style="left:408.10px;top:427.00px;font-size:13px;line-height:13px;color:#a9b3c6;letter-spacing:-0.283px;-webkit-text-stroke:0.3px #a9b3c6;">Fecha</div>
<div class="t" style="left:498.80px;top:427.00px;font-size:13px;line-height:13px;color:#a9b3c6;letter-spacing:-1.281px;-webkit-text-stroke:0.3px #a9b3c6;">Ref.</div>
<div class="t" style="left:571.60px;top:427.00px;font-size:13px;line-height:13px;color:#a9b3c6;letter-spacing:-0.616px;-webkit-text-stroke:0.3px #a9b3c6;">Par</div>
<div class="t" style="left:658.00px;top:427.00px;font-size:13px;line-height:13px;color:#a9b3c6;letter-spacing:-0.269px;-webkit-text-stroke:0.3px #a9b3c6;">Tipo</div>
<div class="t" style="left:739.80px;top:427.00px;font-size:13px;line-height:13px;color:#a9b3c6;letter-spacing:-0.246px;-webkit-text-stroke:0.3px #a9b3c6;">O. de Venta</div>
<div class="t" style="left:830.60px;top:427.00px;font-size:13px;line-height:13px;color:#a9b3c6;letter-spacing:-0.150px;-webkit-text-stroke:0.3px #a9b3c6;">O. de Compra</div>
<div class="t" style="left:975.00px;top:427.00px;font-size:13px;line-height:13px;color:#a9b3c6;letter-spacing:0.423px;-webkit-text-stroke:0.3px #a9b3c6;">Cantidad</div>
<div class="t" style="left:1103.00px;top:427.00px;font-size:13px;line-height:13px;color:#a9b3c6;letter-spacing:-0.170px;-webkit-text-stroke:0.3px #a9b3c6;">Precio</div>
<div class="t" style="left:1238.00px;top:427.00px;font-size:13px;line-height:13px;color:#a9b3c6;letter-spacing:0.135px;-webkit-text-stroke:0.3px #a9b3c6;">Total</div>
<div class="r" style="left:343px;top:449px;width:929px;height:1.5px;background:#aab4c8;"></div>
<div class="r" style="left:343px;top:450px;width:929px;height:30px;background:#f4f5f7;"></div>
<div class="t" style="left:377.50px;top:458.67px;font-size:12.2px;line-height:12.2px;color:#383838;letter-spacing:0.088px;">13/08/2020 16:50</div>
<div class="t" style="left:498.80px;top:458.67px;font-size:12.2px;line-height:12.2px;color:#383838;">5846</div>
<div class="t" style="left:571.60px;top:458.67px;font-size:12.2px;line-height:12.2px;color:#383838;">BTC/VES</div>
<div class="t" style="left:658.00px;top:458.67px;font-size:12.2px;line-height:12.2px;color:#383838;">Compra</div>
<div class="t" style="left:739.80px;top:458.67px;font-size:12.2px;line-height:12.2px;color:#383838;">420</div>
<div class="t" style="left:830.60px;top:458.67px;font-size:12.2px;line-height:12.2px;color:#383838;">421</div>
<div class="t" style="left:967.40px;top:458.67px;font-size:12.2px;line-height:12.2px;color:#383838;letter-spacing:-0.206px;">0,00050000</div>
<div class="t" style="left:1046.50px;top:458.67px;font-size:12.2px;line-height:12.2px;color:#383838;letter-spacing:-0.165px;">3.008.000.000,00</div>
<div class="t" style="left:1196.80px;top:458.67px;font-size:12.2px;line-height:12.2px;color:#383838;letter-spacing:-0.185px;">1.504.000,00</div>
<div class="t" style="left:377.50px;top:488.67px;font-size:12.2px;line-height:12.2px;color:#383838;letter-spacing:0.088px;">13/08/2020 16:41</div>
<div class="t" style="left:498.80px;top:488.67px;font-size:12.2px;line-height:12.2px;color:#383838;">5838</div>
<div class="t" style="left:571.60px;top:488.67px;font-size:12.2px;line-height:12.2px;color:#383838;">BTC/VES</div>
<div class="t" style="left:658.00px;top:488.67px;font-size:12.2px;line-height:12.2px;color:#383838;">Compra</div>
<div class="t" style="left:739.80px;top:488.67px;font-size:12.2px;line-height:12.2px;color:#383838;">418</div>
<div class="t" style="left:830.60px;top:488.67px;font-size:12.2px;line-height:12.2px;color:#383838;">419</div>
<div class="t" style="left:967.40px;top:488.67px;font-size:12.2px;line-height:12.2px;color:#383838;letter-spacing:-0.206px;">0,00050000</div>
<div class="t" style="left:1046.50px;top:488.67px;font-size:12.2px;line-height:12.2px;color:#383838;letter-spacing:-0.165px;">3.008.000.000,00</div>
<div class="t" style="left:1196.80px;top:488.67px;font-size:12.2px;line-height:12.2px;color:#383838;letter-spacing:-0.185px;">1.504.000,00</div>
<div class="r" style="left:343px;top:510px;width:929px;height:30px;background:#f4f5f7;"></div>
<div class="t" style="left:377.50px;top:518.67px;font-size:12.2px;line-height:12.2px;color:#383838;letter-spacing:0.088px;">13/08/2020 16:41</div>
<div class="t" style="left:498.80px;top:518.67px;font-size:12.2px;line-height:12.2px;color:#383838;">5830</div>
<div class="t" style="left:571.60px;top:518.67px;font-size:12.2px;line-height:12.2px;color:#383838;">BTC/VES</div>
<div class="t" style="left:658.00px;top:518.67px;font-size:12.2px;line-height:12.2px;color:#383838;">Compra</div>
<div class="t" style="left:739.80px;top:518.67px;font-size:12.2px;line-height:12.2px;color:#383838;">417</div>
<div class="t" style="left:830.60px;top:518.67px;font-size:12.2px;line-height:12.2px;color:#383838;">419</div>
<div class="t" style="left:967.40px;top:518.67px;font-size:12.2px;line-height:12.2px;color:#383838;letter-spacing:-0.206px;">0,00050000</div>
<div class="t" style="left:1046.50px;top:518.67px;font-size:12.2px;line-height:12.2px;color:#383838;letter-spacing:-0.165px;">3.008.000.000,00</div>
<div class="t" style="left:1196.80px;top:518.67px;font-size:12.2px;line-height:12.2px;color:#383838;letter-spacing:-0.185px;">1.504.000,00</div>
<div class="t" style="left:377.50px;top:548.67px;font-size:12.2px;line-height:12.2px;color:#383838;letter-spacing:0.088px;">13/08/2020 16:16</div>
<div class="t" style="left:498.80px;top:548.67px;font-size:12.2px;line-height:12.2px;color:#383838;">5822</div>
<div class="t" style="left:571.60px;top:548.67px;font-size:12.2px;line-height:12.2px;color:#383838;">BTC/VES</div>
<div class="t" style="left:658.00px;top:548.67px;font-size:12.2px;line-height:12.2px;color:#383838;">Compra</div>
<div class="t" style="left:739.80px;top:548.67px;font-size:12.2px;line-height:12.2px;color:#383838;">415</div>
<div class="t" style="left:830.60px;top:548.67px;font-size:12.2px;line-height:12.2px;color:#383838;">416</div>
<div class="t" style="left:967.40px;top:548.67px;font-size:12.2px;line-height:12.2px;color:#383838;letter-spacing:-0.206px;">0,00500000</div>
<div class="t" style="left:1046.50px;top:548.67px;font-size:12.2px;line-height:12.2px;color:#383838;letter-spacing:-0.165px;">3.008.000.000,00</div>
<div class="t" style="left:1190.00px;top:548.67px;font-size:12.2px;line-height:12.2px;color:#383838;letter-spacing:-0.168px;">15.040.000,00</div>
<div class="r" style="left:343px;top:570px;width:929px;height:10px;background:#f4f5f7;"></div>
<div class="r" style="left:343px;top:590px;width:929px;height:10px;background:#f4f5f7;"></div>
<div class="r" style="left:343px;top:610px;width:929px;height:10px;background:#f4f5f7;"></div>
<div class="r" style="left:1351px;top:97px;width:15px;height:528px;background:#f1f1f1;"></div>
<svg class="r" style="left:1354px;top:101px;" width="9" height="6" viewBox="0 0 9 6"><path d="M0.5 5.5 L4.5 0.5 L8.5 5.5 Z" fill="#a3a3a3"/></svg>
<div class="r" style="left:1353px;top:112px;width:11px;height:384px;background:#c1c1c1;"></div>
<svg class="r" style="left:1354px;top:614px;" width="9" height="6" viewBox="0 0 9 6"><path d="M0.5 0.5 L4.5 5.5 L8.5 0.5 Z" fill="#505050"/></svg>
<div class="r" style="left:40px;top:625px;width:1326px;height:143px;background:#292a2d;"></div>
<div class="r" style="left:40px;top:625px;width:1326px;height:1px;background:#4a4c50;"></div>
<div class="r" style="left:40px;top:652px;width:1326px;height:1px;background:#4a4c50;"></div>
<div class="r" style="left:40px;top:679px;width:1326px;height:1px;background:#4a4c50;"></div>
<div class="r" style="left:40px;top:704px;width:1326px;height:1px;background:#4a4c50;"></div>
<svg class="r" style="left:50px;top:630px;" width="15" height="16" viewBox="0 0 15 16"><path d="M6 12.5 H1.5 V1.5 H12.5 V5.5" fill="none" stroke="#9aa0a6" stroke-width="1.2"/><path d="M6.8 6.5 L14 9.3 L11 10.5 L14 13.5 L12.8 14.7 L9.8 11.7 L8.5 14.5 Z" fill="#9aa0a6"/></svg>
<svg class="r" style="left:75px;top:631px;" width="16" height="16" viewBox="0 0 16 16"><rect x="1" y="6.5" width="6" height="8.5" rx="0.5" fill="none" stroke="#9aa0a6" stroke-width="1.3"/><path d="M4 6.5 V1.5 Q4 1 4.5 1 H14.5 Q15 1 15 1.5 V14.5 Q15 15 14.5 15 H7" fill="none" stroke="#9aa0a6" stroke-width="1.3"/></svg>
<div class="r" style="left:102px;top:632px;width:1px;height:15px;background:#4a4c50;"></div>
<div class="t" style="left:121.00px;top:633.72px;font-size:12.5px;line-height:12.5px;color:#bfc2c6;letter-spacing:-0.272px;">Elements</div>
<div class="t" style="left:195.90px;top:633.72px;font-size:12.5px;line-height:12.5px;color:#bfc2c6;letter-spacing:-0.477px;">Console</div>
<div class="t" style="left:262.60px;top:633.72px;font-size:12.5px;line-height:12.5px;color:#bfc2c6;letter-spacing:-0.576px;">Sources</div>
<div class="r" style="left:317px;top:626px;width:71px;height:26px;background:#000000;"></div>
<div class="t" style="left:328.60px;top:633.72px;font-size:12.5px;line-height:12.5px;color:#f4f4f4;letter-spacing:0.226px;">Network</div>
<div class="t" style="left:399.40px;top:633.72px;font-size:12.5px;line-height:12.5px;color:#bfc2c6;letter-spacing:-0.146px;">Performance</div>
<div class="t" style="left:493.80px;top:633.72px;font-size:12.5px;line-height:12.5px;color:#bfc2c6;letter-spacing:0.011px;">Memory</div>
<div class="t" style="left:563.00px;top:633.72px;font-size:12.5px;line-height:12.5px;color:#bfc2c6;letter-spacing:0.035px;">Application</div>
<div class="t" style="left:648.50px;top:633.72px;font-size:12.5px;line-height:12.5px;color:#bfc2c6;letter-spacing:-0.236px;">Security</div>
<div class="t" style="left:716.70px;top:633.72px;font-size:12.5px;line-height:12.5px;color:#bfc2c6;letter-spacing:-0.129px;">Lighthouse</div>
<div class="r" style="left:1275px;top:632px;width:1px;height:15px;background:#4a4c50;"></div>
<svg class="r" style="left:1286px;top:631px;" width="16" height="16" viewBox="0 0 16 16"><path d="M6.6 0.8 H9.4 L9.8 2.9 L11.3 3.7 L13.3 3 L14.7 5.4 L13.1 6.8 V9.2 L14.7 10.6 L13.3 13 L11.3 12.3 L9.8 13.1 L9.4 15.2 H6.6 L6.2 13.1 L4.7 12.3 L2.7 13 L1.3 10.6 L2.9 9.2 V6.8 L1.3 5.4 L2.7 3 L4.7 3.7 L6.2 2.9 Z" fill="#9aa0a6"/><circle cx="8" cy="8" r="2.4" fill="#292a2d"/></svg>
<div class="r" style="left:1321px;top:632px;width:3px;height:3px;background:#9aa0a6;border-radius:50%;"></div>
<div class="r" style="left:1321px;top:638px;width:3px;height:3px;background:#9aa0a6;border-radius:50%;"></div>
<div class="r" style="left:1321px;top:644px;width:3px;height:3px;background:#9aa0a6;border-radius:50%;"></div>
<svg class="r" style="left:1344px;top:633px;" width="12" height="12" viewBox="0 0 12 12"><path d="M1 1 L11 11 M11 1 L1 11" stroke="#9aa0a6" stroke-width="1.5"/></svg>
<div class="r" style="left:50px;top:660px;width:13px;height:13px;background:#f0193c;border-radius:50%;box-shadow:0 0 2px #f0193c;"></div>
<svg class="r" style="left:77px;top:659px;" width="15" height="15" viewBox="0 0 15 15"><circle cx="7.5" cy="7.5" r="5.8" fill="none" stroke="#9aa0a6" stroke-width="1.6"/><path d="M3.5 3.5 L11.5 11.5" stroke="#9aa0a6" stroke-width="1.6"/></svg>
<div class="r" style="left:102px;top:659px;width:1px;height:15px;background:#4a4c50;"></div>
<svg class="r" style="left:114px;top:660px;" width="15" height="14" viewBox="0 0 15 14"><path d="M1 1 H14 L10 6.5 V12.8 H5 V6.5 Z" fill="#264b86" stroke="#3274dc" stroke-width="1.5" stroke-linejoin="round"/><path d="M3.2 2.4 H11.8 L9 6 H6 Z" fill="#292a2d"/></svg>
<svg class="r" style="left:141px;top:659px;" width="15" height="15" viewBox="0 0 15 15"><circle cx="5.8" cy="5.8" r="4.6" fill="none" stroke="#9aa0a6" stroke-width="1.5"/><path d="M9.2 9.2 L14 14" stroke="#9aa0a6" stroke-width="1.6"/></svg>
<div class="r" style="left:167px;top:659px;width:1px;height:15px;background:#4a4c50;"></div>
<div class="r" style="left:178px;top:660px;width:12px;height:12px;background:#353535;border:1px solid #7d8086;border-radius:2px;box-sizing:border-box;"></div>
<div class="t" style="left:196.30px;top:660.62px;font-size:12.5px;line-height:12.5px;color:#bfc2c6;letter-spacing:-0.289px;">Preserve log</div>
<div class="r" style="left:275px;top:660px;width:12px;height:12px;background:#353535;border:1px solid #7d8086;border-radius:2px;box-sizing:border-box;"></div>
<div class="t" style="left:293.30px;top:660.62px;font-size:12.5px;line-height:12.5px;color:#bfc2c6;letter-spacing:-0.410px;">Disable cache</div>
<div class="r" style="left:376px;top:659px;width:1px;height:15px;background:#4a4c50;"></div>
<div class="t" style="left:387.70px;top:660.62px;font-size:12.5px;line-height:12.5px;color:#bfc2c6;letter-spacing:-0.127px;">Online</div>
<svg class="r" style="left:446px;top:662px;" width="9" height="8" viewBox="0 0 9 8"><path d="M0 0.5 H9 L4.5 7.5 Z" fill="#9aa0a6"/></svg>
<div class="r" style="left:466px;top:659px;width:1px;height:15px;background:#4a4c50;"></div>
<svg class="r" style="left:479px;top:659px;" width="12" height="14" viewBox="0 0 12 14"><path d="M6 0.5 L11.5 6.5 H8 V10.5 H4 V6.5 H0.5 Z" fill="#c4c7cc"/><rect x="0.5" y="12" width="11" height="1.5" fill="#c4c7cc"/></svg>
<svg class="r" style="left:507px;top:659px;" width="12" height="14" viewBox="0 0 12 14"><path d="M6 10.5 L11.5 4.5 H8 V0.5 H4 V4.5 H0.5 Z" fill="#c4c7cc"/><rect x="0.5" y="12" width="11" height="1.5" fill="#c4c7cc"/></svg>
<div class="r" style="left:1331px;top:659px;width:1px;height:15px;background:#4a4c50;"></div>
<svg class="r" style="left:1342px;top:658px;" width="16" height="16" viewBox="0 0 16 16"><path d="M6.6 0.8 H9.4 L9.8 2.9 L11.3 3.7 L13.3 3 L14.7 5.4 L13.1 6.8 V9.2 L14.7 10.6 L13.3 13 L11.3 12.3 L9.8 13.1 L9.4 15.2 H6.6 L6.2 13.1 L4.7 12.3 L2.7 13 L1.3 10.6 L2.9 9.2 V6.8 L1.3 5.4 L2.7 3 L4.7 3.7 L6.2 2.9 Z" fill="#2a60c0"/><circle cx="8" cy="8" r="2.4" fill="#292a2d"/></svg>
<div class="r" style="left:44px;top:683px;width:163px;height:18px;background:#222325;"></div>
<div class="t" style="left:47.30px;top:686.72px;font-size:12.5px;line-height:12.5px;color:#7f8389;letter-spacing:0.084px;">Filter</div>
<div class="r" style="left:220px;top:686px;width:12px;height:12px;background:#353535;border:1px solid #7d8086;border-radius:2px;box-sizing:border-box;"></div>
<div class="t" style="left:238.40px;top:686.72px;font-size:12.5px;line-height:12.5px;color:#bfc2c6;letter-spacing:-0.511px;">Hide data URLs</div>
<div class="r" style="left:327px;top:683px;width:20px;height:19px;background:#76787b;border-radius:6px;"></div>
<div class="t" style="left:329.80px;top:686.72px;font-size:12.5px;line-height:12.5px;color:#111111;letter-spacing:0.304px;">All</div>
<div class="r" style="left:351px;top:685px;width:1px;height:15px;background:#4a4c50;"></div>
<div class="t" style="left:359.20px;top:686.72px;font-size:12.5px;line-height:12.5px;color:#bfc2c6;letter-spacing:-1.296px;">XHR</div>
<div class="t" style="left:392.50px;top:686.72px;font-size:12.5px;line-height:12.5px;color:#bfc2c6;letter-spacing:-2.088px;">JS</div>
<div class="t" style="left:415.20px;top:686.72px;font-size:12.5px;line-height:12.5px;color:#bfc2c6;letter-spacing:-2.802px;">CSS</div>
<div class="t" style="left:445.60px;top:686.72px;font-size:12.5px;line-height:12.5px;color:#bfc2c6;letter-spacing:-0.569px;">Img</div>
<div class="t" style="left:476.30px;top:686.72px;font-size:12.5px;line-height:12.5px;color:#bfc2c6;letter-spacing:-0.287px;">Media</div>
<div class="t" style="left:519.40px;top:686.72px;font-size:12.5px;line-height:12.5px;color:#bfc2c6;letter-spacing:-0.038px;">Font</div>
<div class="t" style="left:554.50px;top:686.72px;font-size:12.5px;line-height:12.5px;color:#bfc2c6;letter-spacing:-0.465px;">Doc</div>
<div class="t" style="left:585.60px;top:686.72px;font-size:12.5px;line-height:12.5px;color:#bfc2c6;letter-spacing:-2.536px;">WS</div>
<div class="t" style="left:613.50px;top:686.72px;font-size:12.5px;line-height:12.5px;color:#bfc2c6;letter-spacing:0.037px;">Manifest</div>
<div class="t" style="left:671.70px;top:686.72px;font-size:12.5px;line-height:12.5px;color:#bfc2c6;letter-spacing:0.134px;">Other</div>
<div class="r" style="left:719px;top:686px;width:12px;height:12px;background:#353535;border:1px solid #7d8086;border-radius:2px;box-sizing:border-box;"></div>
<div class="t" style="left:737.20px;top:686.72px;font-size:12.5px;line-height:12.5px;color:#bfc2c6;letter-spacing:-0.352px;">Has blocked cookies</div>
<div class="r" style="left:856px;top:686px;width:12px;height:12px;background:#353535;border:1px solid #7d8086;border-radius:2px;box-sizing:border-box;"></div>
<div class="t" style="left:874.00px;top:686.72px;font-size:12.5px;line-height:12.5px;color:#bfc2c6;letter-spacing:-0.297px;">Blocked Requests</div>
<div class="r" style="left:48px;top:712px;width:12px;height:12px;background:#353535;border:1px solid #7d8086;border-radius:2px;box-sizing:border-box;"></div>
<div class="t" style="left:65.90px;top:712.20px;font-size:13px;line-height:13px;color:#bfc2c6;letter-spacing:-0.442px;">Use large request rows</div>
<div class="r" style="left:711px;top:712px;width:12px;height:12px;background:#353535;border:1px solid #7d8086;border-radius:2px;box-sizing:border-box;"></div>
<div class="t" style="left:729.50px;top:712.20px;font-size:13px;line-height:13px;color:#bfc2c6;letter-spacing:-0.501px;">Group by frame</div>
<div class="r" style="left:48px;top:738px;width:12px;height:12px;background:#a9b136;border-radius:2px;"></div>
<svg class="r" style="left:48px;top:738px;" width="12" height="12" viewBox="0 0 12 12"><path d="M2.5 6.2 L5 8.8 L9.8 2.8" fill="none" stroke="#1e1e1e" stroke-width="1.5"/></svg>
<div class="t" style="left:65.90px;top:737.90px;font-size:13px;line-height:13px;color:#bfc2c6;letter-spacing:-0.486px;">Show overview</div>
<div class="r" style="left:711px;top:738px;width:12px;height:12px;background:#353535;border:1px solid #7d8086;border-radius:2px;box-sizing:border-box;"></div>
<div class="t" style="left:729.50px;top:737.90px;font-size:13px;line-height:13px;color:#bfc2c6;letter-spacing:-0.503px;">Capture screenshots</div>
<div class="r" style="left:40px;top:757px;width:1326px;height:11px;background:#242528;"></div>
<div class="r" style="left:40px;top:757px;width:1326px;height:1px;background:#4a4c50;"></div>
<div class="r" style="left:40px;top:757px;width:1px;height:11px;background:#8a8d92;"></div>
<div class="r" style="left:1364px;top:757px;width:2px;height:11px;background:#8a8d92;"></div>
<div class="r" style="left:177px;top:758px;width:1px;height:10px;background:#4a4c50;"></div>
<div class="t" style="left:143.40px;top:762.91px;font-size:10.5px;line-height:10.5px;color:#c4c7cc;letter-spacing:-0.767px;">500 ms</div>
<div class="r" style="left:315px;top:758px;width:1px;height:10px;background:#4a4c50;"></div>
<div class="t" style="left:276.60px;top:762.91px;font-size:10.5px;line-height:10.5px;color:#c4c7cc;letter-spacing:-0.812px;">1000 ms</div>
<div class="r" style="left:453px;top:758px;width:1px;height:10px;background:#4a4c50;"></div>
<div class="t" style="left:414.60px;top:762.91px;font-size:10.5px;line-height:10.5px;color:#c4c7cc;letter-spacing:-0.812px;">1500 ms</div>
<div class="r" style="left:590px;top:758px;width:1px;height:10px;background:#4a4c50;"></div>
<div class="t" style="left:551.60px;top:762.91px;font-size:10.5px;line-height:10.5px;color:#c4c7cc;letter-spacing:-0.812px;">2000 ms</div>
<div class="r" style="left:728px;top:758px;width:1px;height:10px;background:#4a4c50;"></div>
<div class="t" style="left:689.60px;top:762.91px;font-size:10.5px;line-height:10.5px;color:#c4c7cc;letter-spacing:-0.812px;">2500 ms</div>
<div class="r" style="left:866px;top:758px;width:1px;height:10px;background:#4a4c50;"></div>
<div class="t" style="left:827.60px;top:762.91px;font-size:10.5px;line-height:10.5px;color:#c4c7cc;letter-spacing:-0.812px;">3000 ms</div>
<div class="r" style="left:1004px;top:758px;width:1px;height:10px;background:#4a4c50;"></div>
<div class="t" style="left:965.60px;top:762.91px;font-size:10.5px;line-height:10.5px;color:#c4c7cc;letter-spacing:-0.812px;">3500 ms</div>
<div class="r" style="left:1142px;top:758px;width:1px;height:10px;background:#4a4c50;"></div>
<div class="t" style="left:1103.60px;top:762.91px;font-size:10.5px;line-height:10.5px;color:#c4c7cc;letter-spacing:-0.812px;">4000 ms</div>
<div class="r" style="left:1279px;top:758px;width:1px;height:10px;background:#4a4c50;"></div>
<div class="t" style="left:1240.60px;top:762.91px;font-size:10.5px;line-height:10.5px;color:#c4c7cc;letter-spacing:-0.812px;">4500 ms</div>
</body></html>
